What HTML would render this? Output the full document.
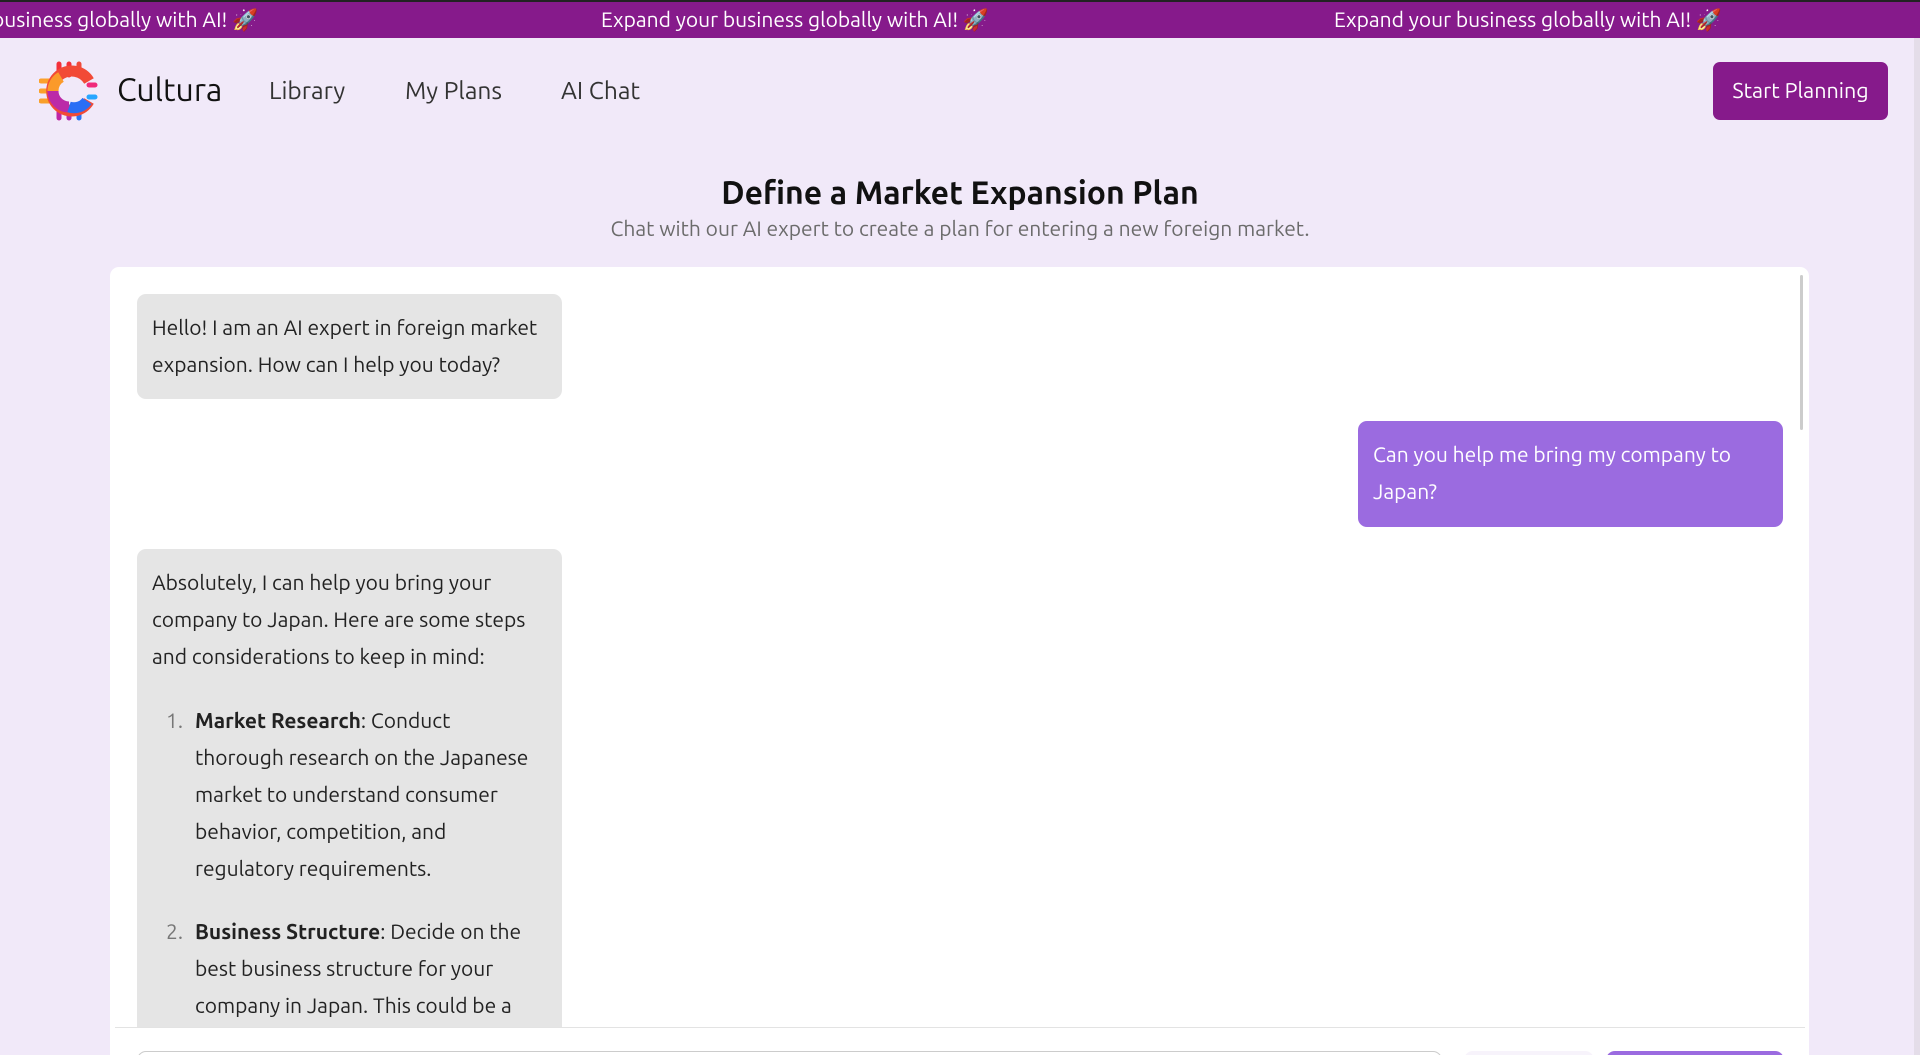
<!DOCTYPE html>
<html><head><meta charset="utf-8"><style>
*{box-sizing:border-box;margin:0;padding:0}
html,body{width:1920px;height:1055px;overflow:hidden}
body{background:#f1e9f9;font-family:"Ubuntu","Liberation Sans","DejaVu Sans",sans-serif;color:#1a1a1a;position:relative}
.banner{position:absolute;left:0;top:0;width:1920px;height:38px;background:#861a8b;border-top:2px solid #222;color:#fff;font-size:21px;white-space:nowrap;overflow:hidden}
.banner span{position:absolute;top:5px}
.nav a{position:absolute;top:76px;font-size:24.5px;color:#333;text-decoration:none}
.logo{position:absolute;left:39px;top:61px}
.brand{position:absolute;left:117px;top:72px;font-size:32px;color:#111}
.btn{position:absolute;left:1713px;top:62px;width:175px;height:58px;background:#861a8b;color:#fff;border-radius:7px;font-size:21.5px;text-align:center;line-height:58px}
h1{position:absolute;left:0;width:1920px;text-align:center;top:175px;font-size:32px;font-weight:bold;color:#111}
.sub{position:absolute;left:0;width:1920px;text-align:center;top:216px;font-size:21px;color:#6b6b6b}
.panel{position:absolute;left:110px;top:267px;width:1699px;height:788px;background:#fff;border-radius:9px 9px 0 0;overflow:hidden}
.b{position:absolute;font-size:21px;line-height:37px;border-radius:9px;padding:10px 15px}
.ai{background:#e5e5e5;color:#222}
.me{background:#9b6be0;color:#fff}
ol{list-style:none;padding-left:43px;padding-right:8px;margin-top:27px}
ol li{margin-bottom:26px;position:relative}
ol li span.n{position:absolute;left:-29px;color:#777}
.sb{position:absolute;left:1690px;top:8px;width:3px;height:155px;background:#ccc;border-radius:2px}
.pagesb{position:absolute;left:1914px;top:38px;width:6px;height:1017px;background:#e4dde9}
</style></head><body>
<div class="banner"><span style="left:-8px">business globally with AI! 🚀</span><span style="left:601px">Expand your business globally with AI! 🚀</span><span style="left:1334px">Expand your business globally with AI! 🚀</span></div>
<div class="pagesb"></div>
<svg class="logo" width="60" height="60" viewBox="0 0 60 60">
<g stroke-linecap="round" stroke-width="5" fill="none">
<line x1="20" y1="3" x2="20" y2="14" stroke="#f4303a"/><line x1="30" y1="3" x2="30" y2="14" stroke="#f4303a"/><line x1="40" y1="3" x2="40" y2="14" stroke="#f04a3a"/>
<line x1="2" y1="20" x2="12" y2="20" stroke="#fca12a"/><line x1="2" y1="30" x2="12" y2="30" stroke="#fca12a"/><line x1="2" y1="40" x2="12" y2="40" stroke="#f9a02a"/>
<line x1="20" y1="46" x2="20" y2="57" stroke="#c025a5"/><line x1="30" y1="46" x2="30" y2="57" stroke="#b42bb0"/><line x1="40" y1="46" x2="40" y2="57" stroke="#2a72f5"/>
<line x1="50" y1="24" x2="56" y2="24" stroke="#f02a7a"/><line x1="50" y1="36" x2="56" y2="36" stroke="#27a6ff"/>
</g>
<path d="M50 20 A20 20 0 1 0 50 40" stroke="#f24a36" stroke-width="11" fill="none"/>
<path d="M14 30 A16 16 0 0 0 30 46" stroke="#bb2aa8" stroke-width="11" fill="none"/>
<path d="M30 46 A16 16 0 0 0 48 40" stroke="#2a6ef5" stroke-width="11" fill="none"/>
<path d="M14 30 A16 16 0 0 1 22 16" stroke="#fb9a2a" stroke-width="11" fill="none"/>
</svg>
<div class="brand">Cultura</div>
<div class="nav"><a style="left:269px">Library</a><a style="left:405px">My Plans</a><a style="left:561px">AI Chat</a></div>
<div class="btn">Start Planning</div>
<h1>Define a Market Expansion Plan</h1>
<div class="sub">Chat with our AI expert to create a plan for entering a new foreign market.</div>
<div class="panel">
<div class="sb"></div>
<div class="b ai" style="left:27px;top:27px;width:425px;height:105px;padding-top:15px">Hello! I am an AI expert in foreign market expansion. How can I help you today?</div>
<div class="b me" style="left:1248px;top:154px;width:425px;height:106px;padding-top:15px">Can you help me bring my company to Japan?</div>
<div class="b ai" style="left:27px;top:282px;width:425px;height:600px;padding-top:15px">Absolutely, I can help you bring your company to Japan. Here are some steps and considerations to keep in mind:
<ol><li><span class="n">1.</span><b>Market Research</b>: Conduct thorough research on the Japanese market to understand consumer behavior, competition, and regulatory requirements.</li>
<li><span class="n">2.</span><b>Business Structure</b>: Decide on the best business structure for your company in Japan. This could be a subsidiary, branch office, or joint venture.</li></ol></div>
<div style="position:absolute;left:5px;top:760px;width:1690px;height:100px;background:#fff;border-top:1px solid #e3e3e3"></div>
<div style="position:absolute;left:27px;top:784px;width:1305px;height:40px;border:1px solid #ccc;border-radius:9px"></div>
<div style="position:absolute;left:1354px;top:784px;width:130px;height:40px;background:#f7f3fb;border-radius:9px"></div>
<div style="position:absolute;left:1496px;top:784px;width:178px;height:40px;background:#9b6be0;border-radius:9px"></div>
</div>
</body></html>
